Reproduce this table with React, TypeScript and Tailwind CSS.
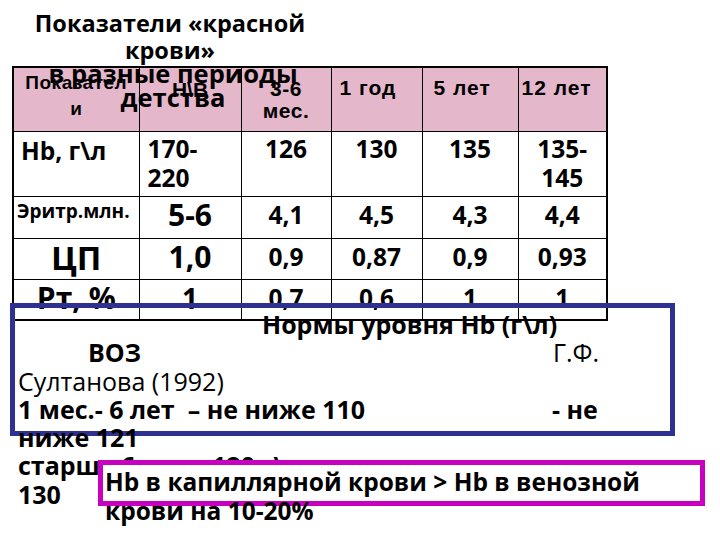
import React from "react";

const td = "border border-black p-0 align-top";

export default function App() {
  return (
    <div className="relative w-[720px] h-[540px] overflow-hidden bg-white text-black">
      {/* Table */}
      <div className="pt-[66px] pl-[12px]">
        <table className="table-fixed border-collapse border-2 border-black">
          <colgroup>
            <col className="w-[126px]" />
            <col className="w-[102px]" />
            <col className="w-[90px]" />
            <col className="w-[91px]" />
            <col className="w-[96px]" />
            <col className="w-[89px]" />
          </colgroup>
          <tbody>
            <tr className="h-[64px] bg-[#e5b7cb] font-['Liberation_Sans',Arial,sans-serif] font-bold">
              <td className={`${td} text-center text-[19px] leading-[26px] pt-[2px] tracking-[0.5px]`}>
                Показател
                <br />и
              </td>
              <td className={`${td} text-center text-[21px] leading-[24px] pt-[10px]`}>Н\В</td>
              <td className={`${td} text-center text-[21px] leading-[22px] pt-[10px] tracking-[0.5px]`}>
                3-6
                <br />
                мес.
              </td>
              <td className={`${td} text-left text-[21px] leading-[22px] pt-[9px] pl-[8px] tracking-[1px]`}>1 год</td>
              <td className={`${td} text-left text-[21px] leading-[22px] pt-[9px] pl-[11px] tracking-[1px]`}>5 лет</td>
              <td className={`${td} text-left text-[21px] leading-[22px] pt-[9px] pl-[3px] tracking-[1px]`}>12 лет</td>
            </tr>
            <tr className="h-[65px] font-['Open_Sans',sans-serif] font-bold text-[24.5px] leading-[29px]">
              <td className={`${td} pl-[7px] pt-[4px]`}>Hb, г\л</td>
              <td className={`${td} pl-[8px] pt-[2px]`}>
                170-
                <br />
                220
              </td>
              <td className={`${td} text-center pt-[2px]`}>126</td>
              <td className={`${td} text-center pt-[2px]`}>130</td>
              <td className={`${td} text-center pt-[2px]`}>135</td>
              <td className={`${td} text-center pt-[2px]`}>
                135-
                <br />
                145
              </td>
            </tr>
            <tr className="h-[42px] font-['Open_Sans',sans-serif] font-bold text-[24.5px]">
              <td className={`${td} align-middle pl-[3px] text-[19px]`}>Эритр.млн.</td>
              <td className={`${td} align-middle text-center text-[30px] leading-[36px]`}>5-6</td>
              <td className={`${td} align-middle text-center`}>4,1</td>
              <td className={`${td} align-middle text-center`}>4,5</td>
              <td className={`${td} align-middle text-center`}>4,3</td>
              <td className={`${td} align-middle text-center`}>4,4</td>
            </tr>
            <tr className="h-[41px] font-['Open_Sans',sans-serif] font-bold text-[24.5px]">
              <td className={`${td} align-middle text-center text-[33px] leading-[38px]`}>ЦП</td>
              <td className={`${td} align-middle text-center text-[30px] leading-[36px]`}>1,0</td>
              <td className={`${td} align-middle text-center`}>0,9</td>
              <td className={`${td} align-middle text-center`}>0,87</td>
              <td className={`${td} align-middle text-center`}>0,9</td>
              <td className={`${td} align-middle text-center`}>0,93</td>
            </tr>
            <tr className="h-[41px] font-['Open_Sans',sans-serif] font-bold text-[24.5px]">
              <td className={`${td} align-middle text-center text-[30px] leading-[36px]`}>Рт, %</td>
              <td className={`${td} align-middle text-center text-[28px] leading-[36px]`}>1</td>
              <td className={`${td} align-middle text-center`}>0,7</td>
              <td className={`${td} align-middle text-center`}>0,6</td>
              <td className={`${td} align-middle text-center`}>1</td>
              <td className={`${td} align-middle text-center`}>1</td>
            </tr>
          </tbody>
        </table>
      </div>

      {/* Title overlay */}
      <div className="absolute left-0 top-[10px] w-[340px] text-center font-['Open_Sans',sans-serif] font-bold">
        <div className="text-[23.5px] leading-[27px]">
          Показатели «красной
          <br />
          крови»
        </div>
        <div className="text-[25.5px] leading-[23.5px] -mt-[2px] pl-[6px]">
          в разные периоды
          <br />
          детства
        </div>
      </div>

      {/* Blue frame */}
      <div className="absolute left-[10px] top-[303px] w-[665px] h-[133px] border-[5px] border-[#2e3192]" />

      {/* Norms text */}
      <div className="absolute left-[18px] top-[310px] w-[640px] font-['Open_Sans',sans-serif] text-[25px] leading-[28.3px]">
        <div className="pl-[244px] font-bold">Нормы уровня Hb (г\л)</div>
        <div className="flex">
          <span className="w-[535px] shrink-0 pl-[70px] font-bold">ВОЗ</span>
          <span>Г.Ф.</span>
        </div>
        <div>Султанова (1992)</div>
        <div className="flex font-bold">
          <span className="w-[534px] shrink-0">1 мес.- 6 лет&nbsp; – не ниже 110</span>
          <span>- не</span>
        </div>
        <div className="font-bold">ниже 121</div>
        <div className="flex font-bold">
          <span className="w-[530px] shrink-0">старше 6 лет – 120 г\л</span>
          <span>- выше</span>
        </div>
        <div className="font-bold">130</div>
      </div>

      {/* Magenta frame with text */}
      <div className="absolute left-[98px] top-[460px] w-[607px] h-[46px] border-[5px] border-[#c800c0] bg-white" />
      <div className="absolute left-[105px] top-[467px] font-['Open_Sans',sans-serif] font-bold text-[24.5px] leading-[29px] whitespace-nowrap">
        Hb в капиллярной крови &gt; Hb в венозной
        <br />
        крови на 10-20%
      </div>
    </div>
  );
}
